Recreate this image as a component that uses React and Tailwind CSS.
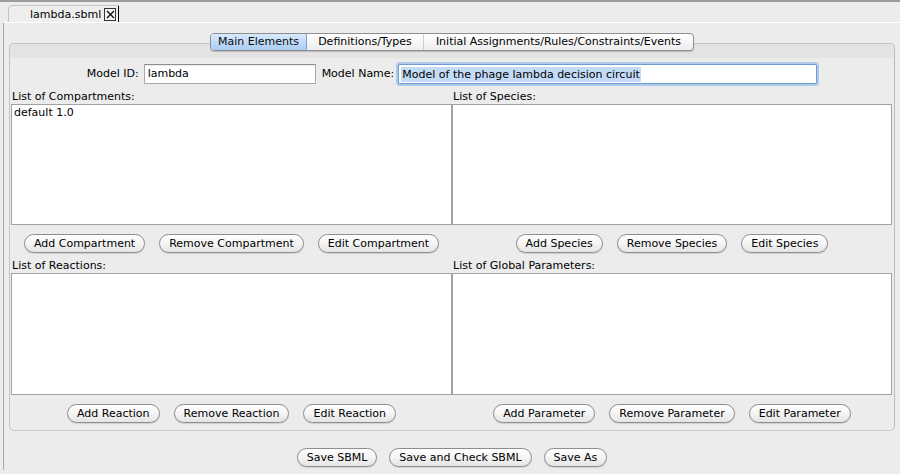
import React from "react";

function Btn({ children }) {
  return (
    <div className="h-[19px] px-[9px] rounded-full border border-[#8e8e8e] bg-linear-to-b from-[#ffffff] via-[#f4f4f4] to-[#e4e4e4] shadow-[0_1px_1px_rgba(0,0,0,0.12)] flex items-center leading-none whitespace-nowrap">
      {children}
    </div>
  );
}

function Column({ label, height, first, buttons }) {
  return (
    <div className="flex flex-col">
      <div className="h-[14px] leading-[14px] pl-[1px] whitespace-nowrap">{label}</div>
      <div
        className={`border border-[#a2a2a2] bg-white ${height === 121 ? "h-[121px]" : "h-[122px]"}`}
      >
        {first ? <div className="pl-[2px] pt-[1px] leading-[14px]">{first}</div> : null}
      </div>
      <div className="mt-[9px] flex justify-center gap-[14px]">
        {buttons.map((b) => (
          <Btn key={b}>{b}</Btn>
        ))}
      </div>
    </div>
  );
}

export default function App() {
  return (
    <div className="w-[900px] h-[474px] bg-[#ececec] overflow-hidden text-[11px] text-black font-['DejaVu_Sans','Liberation_Sans',sans-serif]">
      <div className="h-[2px] bg-[#9c9c9c]" />
      <div className="h-[20px] flex items-end pl-[8px]">
        <div className="h-[17px] w-[111px] border-l border-t border-[#c2c2c2] rounded-tl-[5px] bg-[#eeeeee] flex items-center pl-[21px]">
          <span className="leading-none">lambda.sbml</span>
          <div className="ml-[3px] w-[13px] h-[13px] border border-[#333] bg-[#f4f4f4] flex items-center justify-center">
            <svg width="9" height="9" viewBox="0 0 9 9">
              <path d="M1 1 L8 8 M8 1 L1 8" stroke="#111" strokeWidth="1.4" />
            </svg>
          </div>
          <div className="ml-[2px] w-px h-[16px] bg-black" />
        </div>
      </div>
      <div className="ml-[3px] h-[448px] border-l border-l-[#a9a9a9] border-t border-t-white pl-[5px] pt-[20px]">
        <div className="relative w-[886px] h-[388px] border border-[#c4c4c4] border-r-[#bdbdbd] border-b-[#c9c9c9] rounded-[5px] bg-[#ececec]">
          <div className="h-[14px] bg-[#e3e3e3] rounded-t-[4px]" />
          <div className="absolute left-1/2 -translate-x-1/2 top-[-11px] h-[18px] flex rounded-[4px] border border-[#8f8f8f] bg-linear-to-b from-[#ffffff] to-[#ededed] shadow-[0_1px_1px_rgba(0,0,0,0.18)] overflow-hidden">
            <div className="w-[96px] flex items-center justify-center bg-linear-to-b from-[#d8e9fc] to-[#a9cdf3] border-r border-[#7c9fcc] text-[#0a0a0a]">
              Main Elements
            </div>
            <div className="w-[117px] flex items-center justify-center border-r border-[#cfcfcf]">
              Definitions/Types
            </div>
            <div className="w-[269px] flex items-center justify-center">
              Initial Assignments/Rules/Constraints/Events
            </div>
          </div>

          <div className="mt-[6px] h-[20px] flex justify-center items-center">
            <span className="mr-[5px] whitespace-nowrap">Model ID:</span>
            <div className="w-[172px] h-[20px] border border-[#a9a9a9] border-t-[#8e8e8e] bg-white shadow-[inset_0_1px_1px_rgba(0,0,0,0.08)] flex items-center pl-[3px]">
              lambda
            </div>
            <span className="ml-[6px] mr-[4px] whitespace-nowrap">Model Name:</span>
            <div className="w-[419px] h-[20px] border border-[#6f9bd1] bg-white shadow-[0_0_0_2px_#aecaea] rounded-[2px] flex items-center pl-[2px]">
              <span className="bg-[#c3dbf7] leading-[15px] px-[1px] whitespace-nowrap">
                Model of the phage lambda decision circuit
              </span>
            </div>
          </div>

          <div className="mt-[6px] pl-[1px] grid grid-cols-[441px_440px]">
            <Column
              label="List of Compartments:"
              height={121}
              first="default 1.0"
              buttons={["Add Compartment", "Remove Compartment", "Edit Compartment"]}
            />
            <Column
              label="List of Species:"
              height={121}
              buttons={["Add Species", "Remove Species", "Edit Species"]}
            />
          </div>
          <div className="mt-[6px] pl-[1px] grid grid-cols-[441px_440px]">
            <Column
              label="List of Reactions:"
              height={122}
              buttons={["Add Reaction", "Remove Reaction", "Edit Reaction"]}
            />
            <Column
              label="List of Global Parameters:"
              height={122}
              buttons={["Add Parameter", "Remove Parameter", "Edit Parameter"]}
            />
          </div>
        </div>
        <div className="w-[886px] mt-[17px] flex justify-center gap-[12px]">
          <Btn>Save SBML</Btn>
          <Btn>Save and Check SBML</Btn>
          <Btn>Save As</Btn>
        </div>
      </div>
    </div>
  );
}
